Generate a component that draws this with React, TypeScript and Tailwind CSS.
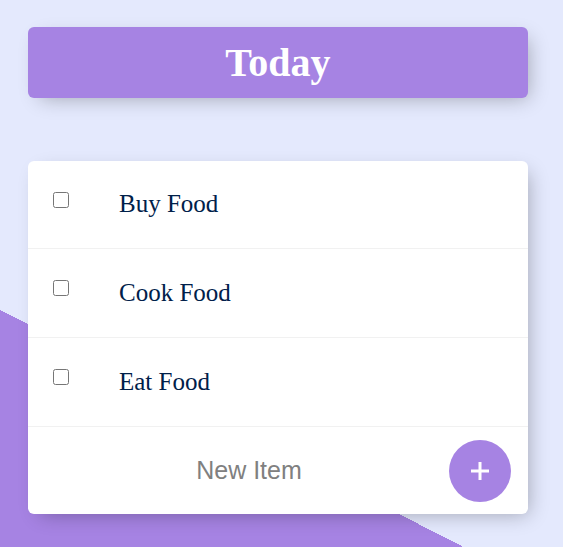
import { useState } from "react";

const initialItems = ["Buy Food", "Cook Food", "Eat Food"];

export default function App() {
  const [items, setItems] = useState<string[]>(initialItems);
  const [checked, setChecked] = useState<boolean[]>(initialItems.map(() => false));
  const [newItem, setNewItem] = useState("");

  const addItem = (e: React.FormEvent) => {
    e.preventDefault();
    if (!newItem.trim()) return;
    setItems([...items, newItem.trim()]);
    setChecked([...checked, false]);
    setNewItem("");
  };

  return (
    <div className="h-[547px] overflow-hidden bg-[linear-gradient(27.1deg,#a683e3_28.4%,#e4e9fd_28.4%)] pt-[27px] font-['Liberation_Serif','Times_New_Roman',serif]">
      {/* Heading */}
      <div className="ml-[28px] w-[500px] rounded-[6px] bg-[#a683e3] shadow-[6px_6px_19px_-6px_rgba(0,0,0,0.3)]">
        <h1 className="py-[12.5px] text-center text-[40px] font-bold leading-[46px] text-white">
          Today
        </h1>
      </div>

      {/* List */}
      <div className="ml-[28px] mt-[62.5px] w-[500px] rounded-[6px] bg-white shadow-[6px_6px_19px_-6px_rgba(0,0,0,0.3)]">
        {items.map((item, i) => (
          <div
            key={i}
            className="flex h-[88.75px] items-center border-b border-[#f1f1f1]"
          >
            <input
              type="checkbox"
              checked={checked[i]}
              onChange={() =>
                setChecked(checked.map((c, j) => (j === i ? !c : c)))
              }
              className="mx-[25px] mt-[31px] h-4 w-4 self-start"
            />
            <p
              className={`px-[25px] text-[25px] leading-[28.75px] text-[#00204a] ${
                checked[i] ? "line-through decoration-[#a683e3]" : ""
              }`}
            >
              {item}
            </p>
          </div>
        ))}

        <form
          onSubmit={addItem}
          className="flex h-[87.5px] items-center pl-[25px] pr-[17px]"
        >
          <input
            type="text"
            value={newItem}
            onChange={(e) => setNewItem(e.target.value)}
            placeholder="New Item"
            autoComplete="off"
            className="h-[75px] min-w-0 flex-1 bg-transparent text-center font-['Liberation_Sans',Arial,sans-serif] text-[25px] text-black outline-none placeholder:text-[#808080]"
          />
          <button
            type="submit"
            className="ml-[4px] flex h-[62px] w-[62px] shrink-0 items-center justify-center rounded-full bg-[#a683e3]"
          >
            <svg width="18" height="18" viewBox="0 0 18 18">
              <path
                d="M9 0v18M0 9h18"
                stroke="white"
                strokeWidth="3"
                fill="none"
              />
            </svg>
          </button>
        </form>
      </div>
    </div>
  );
}
